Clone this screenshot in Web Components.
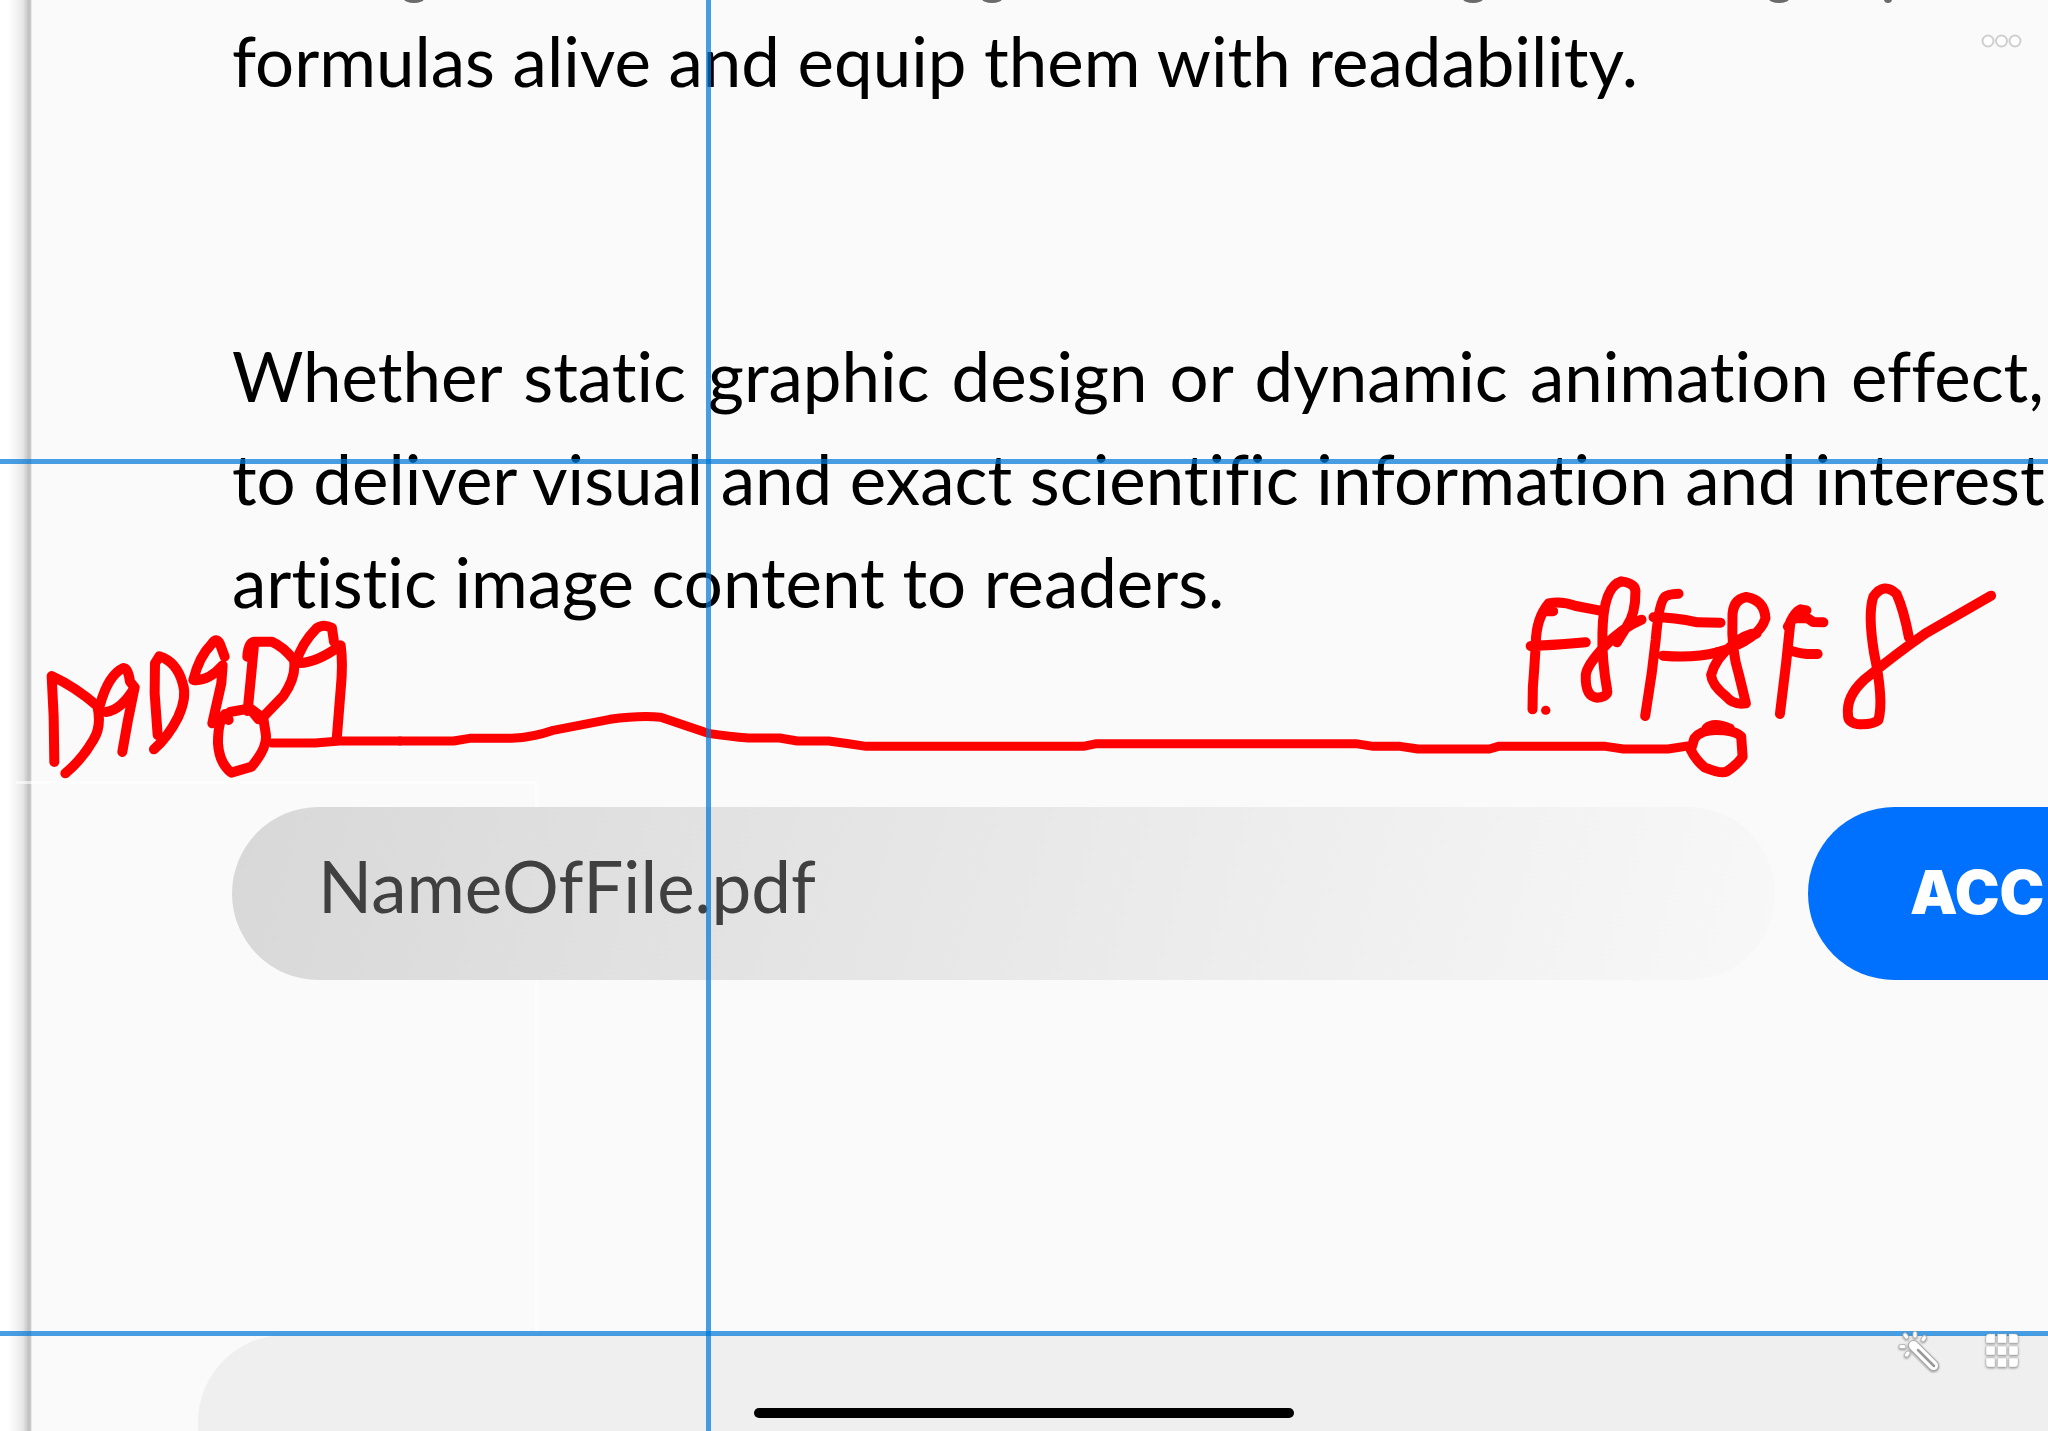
<!DOCTYPE html>
<html lang="en">
<head>
<meta charset="utf-8">
<title>Design review</title>
<style>
html, body { margin: 0; height: 100%; overflow: hidden; background: #fafafa; }
</style>
</head>
<body>
<review-canvas>
  <copy-block>
    <span>formulas alive and equip them with readability.</span>
  </copy-block>
  <copy-block>
    <span>Whether static graphic design or dynamic animation effect,</span>
    <span>to deliver visual and exact scientific information and interest</span>
    <span>artistic image content to readers.</span>
  </copy-block>
  <file-row></file-row>
  <next-panel slot="footer"></next-panel>
  <ink-notes slot="overlay"></ink-notes>
  <guide-lines slot="overlay"></guide-lines>
  <canvas-tools slot="overlay"></canvas-tools>
</review-canvas>
<script>
const define = (name, html) => customElements.define(name, class extends HTMLElement {
  constructor() {
    super();
    this.attachShadow({ mode: 'open' }).innerHTML = html;
  }
});

define('review-canvas', `
<style>
:host { position: relative; display: grid; grid-template-columns: 32px minmax(0, 1fr); min-height: 100vh; overflow: hidden; background: #fafafa; font-family: Lato, sans-serif; font-variant-ligatures: none; }
.edge { background: linear-gradient(90deg, #fff 24%, #f4f4f4 50%, #e6e6e6 72%, #c0c0c0 90%, #c6c6c6 95%, #fafafa); }
.sheet { display: flex; flex-direction: column; min-width: 0; }
main { display: flex; flex-direction: column; gap: 212px; padding: 9px 0 0 200px; }
::slotted(file-row) { margin-top: -38px; }
.foot { margin-top: 355px; flex: 1; display: flex; padding-left: 166px; }
</style>
<div class="edge"></div>
<div class="sheet">
  <main><slot></slot></main>
  <div class="foot"><slot name="footer"></slot></div>
</div>
<slot name="overlay"></slot>`);

define('copy-block', `
<style>
:host { display: flex; flex-direction: column; padding-right: 4px; font-size: 69px; line-height: 103px; color: #000; white-space: nowrap; }
::slotted(span:not(:last-child)) { text-align: justify; text-align-last: justify; }
</style>
<slot></slot>`);

define('file-row', `
<style>
:host { display: flex; gap: 33px; }
label { flex: 0 0 1543px; display: flex; border-radius: 87px; background: linear-gradient(105deg, #d8d8d8, #f8f8f8); }
input { flex: 1; box-sizing: border-box; height: 173px; padding: 0 86px 16px; border: 0; outline: 0; background: none; font: 71px Lato, sans-serif; color: #404040; }
button { flex: 0 0 520px; padding: 0 0 4px 102px; border: 0; border-radius: 87px; background: #0070ff; color: #fff; font: 900 60px Inter, sans-serif; text-align: left; }
</style>
<label><input type="text" value="NameOfFile.pdf" aria-label="File name"></label>
<button type="button">ACC</button>`);

define('next-panel', `
<style>
:host { display: block; flex: 1; background: #efefef; border-top-left-radius: 87px; }
</style>`);

define('guide-lines', `
<style>
:host { position: absolute; inset: 0; pointer-events: none; }
i { position: absolute; background: rgba(0, 120, 215, .72); }
.h { left: 0; right: 0; height: 5px; }
.v { top: 0; bottom: 0; width: 5px; left: 706px; }
b { position: absolute; background: #fff; opacity: .6; }
</style>
<b style="left:16px;top:781px;width:521px;height:3px"></b>
<b style="left:535px;top:784px;width:3px;height:23px"></b>
<b style="left:535px;top:980px;width:3px;height:351px"></b>
<i class="h" style="top:459px"></i>
<i class="h" style="top:1331px"></i>
<i class="v"></i>`);

define('ink-notes', `
<style>
:host { position: absolute; inset: 0; pointer-events: none; }
svg { display: block; overflow: visible; }
path, ellipse { fill: none; stroke: #f00; stroke-width: 10px; stroke-linecap: round; stroke-linejoin: round; vector-effect: non-scaling-stroke; }
.thin { stroke-width: 9px; }
.tail { fill: #6b6b6b; stroke: none; }
</style>
<svg width="2048" height="1431" aria-hidden="true">
  <g>
    <ellipse class="tail" cx="414" cy="-1" rx="10" ry="4"/><ellipse class="tail" cx="992" cy="-1" rx="10" ry="4"/>
    <ellipse class="tail" cx="1473" cy="-1" rx="10" ry="4"/><ellipse class="tail" cx="1779" cy="-1" rx="10" ry="4"/>
    <ellipse class="tail" cx="1888" cy="-1" rx="4" ry="4"/>
  </g>
  <g transform="translate(0 600) scale(.3333)">
    <path d="M163 486L161 350L155 228Q225 260 292 318Q306 380 280 420Q245 480 196 520"/>
    <path d="M300 315Q325 225 370 204Q385 205 390 245L404 262Q365 330 318 336M404 262L384 360L367 456"/>
    <path d="M473 405L464 280L465 190L478 169Q530 185 548 250Q562 290 535 350Q505 410 462 448"/>
    <path d="M674 170L660 132Q650 110 635 132Q597 170 580 240Q625 245 668 196L664 250L637 370"/>
    <path d="M686 360L676 342Q654 360 654 430Q658 490 694 518L755 500Q805 440 797 400L790 355L750 325L690 336M745 320L776 358"/>
    <path d="M742 170Q745 125 765 125L815 125Q850 140 882 180Q890 230 850 288L790 350M762 135L754 220L743 333"/>
    <path d="M888 188Q905 130 950 85Q970 70 996 84L1002 125M888 188Q940 195 1022 136Q1030 190 1022 270L1010 420"/>
  </g>
  <path class="thin" d="M272 743H315L340 741H400"/>
  <g transform="translate(400 680) scale(.893 .3333)">
    <path class="thin" d="M0 183H60L78 175H125Q150 171 170 152L235 118Q270 105 292 112L345 160Q370 170 390 174H425L445 183H480Q500 190 522 199H765L780 191H1070L1090 199H1120L1140 207H1220L1230 199H1350L1370 207H1420L1442 198"/>
  </g>
  <g transform="translate(1480 550) scale(.36224 .3333)">
    <path d="M145 478L146 410Q150 360 154 280Q155 205 190 160Q225 152 265 168L332 182M178 184L202 184M140 288Q220 285 292 277"/>
    <path class="thin" d="M181 481L182 481"/>
    <path d="M446 209Q390 235 345 288Q295 345 292 375Q290 440 323 443Q355 440 351 420Q336 330 338 250Q340 110 390 94Q430 100 429 125Q430 190 405 230L378 277"/>
    <path d="M456 498L474 370L485 270Q494 155 511 140Q520 132 548 131M479 202Q535 202 600 217L664 218M505 317Q590 325 655 307"/>
    <path d="M655 307Q770 270 788 205Q785 150 735 141Q695 150 697 205Q693 300 715 375L734 460Q700 466 680 440Q640 405 638 375Q650 325 695 286Q735 250 764 250L700 286"/>
    <path d="M828 492L845 340L857 215Q870 185 885 178L901 181M850 230L865 204L905 205L920 216L948 217M865 304Q890 314 932 312"/>
    <path d="M1184 262Q1170 180 1150 132Q1115 95 1086 140Q1070 190 1088 310Q1115 450 1100 510Q1085 525 1040 522Q1015 515 1016 495Q1010 440 1060 390Q1150 310 1230 250L1411 137"/>
    <path d="M582 600L592 565Q610 540 650 540Q705 540 721 560L725 620Q710 645 680 665Q665 672 620 652Q595 630 582 600M625 535Q645 515 690 536"/>
  </g>
</svg>`);

define('canvas-tools', `
<style>
:host { position: absolute; inset: 0; pointer-events: none; }
button { position: absolute; padding: 0; border: 0; background: none; pointer-events: auto; }
svg { display: block; }
.more { right: 26px; top: 34px; }
.wand { right: 108px; top: 1330px; }
.grid { right: 29px; top: 1333px; }
.wand svg, .grid svg { filter: drop-shadow(0 1px 1px rgba(0,0,0,.4)); overflow: visible; }
.home { position: absolute; left: 50%; bottom: 13px; width: 540px; height: 10px; margin-left: -270px; border-radius: 5px; background: #000; }
</style>
<button class="more" type="button" aria-label="More"><svg width="41" height="14"><g fill="#fff" stroke="#cfcfcf" stroke-width="2"><circle cx="7" cy="7" r="5.500"/><circle cx="20.500" cy="7" r="5.500"/><circle cx="34" cy="7" r="5.500"/></g></svg></button>
<button class="wand" type="button" aria-label="Auto adjust"><svg width="42" height="42" viewBox="0 0 42 42">
<g fill="none" stroke-linecap="round"><g stroke="#aaa" stroke-width="11"><path d="M15.500 15.500L35.500 35.500"/></g>
<g stroke="#bbb" stroke-width="5"><path d="M17 3.500V6M7 5L8.500 7M26.500 7.500L25 9.500M3 16.500H6M8.500 25L10 23"/></g>
<g stroke="#fff" stroke-width="9"><path d="M15.500 15.500L35.500 35.500"/></g>
<g stroke="#fff" stroke-width="3"><path d="M17 3.500V6M7 5L8.500 7M26.500 7.500L25 9.500M3 16.500H6M8.500 25L10 23"/></g>
<path d="M20 20L36 36" stroke="#999" stroke-width="2.500"/></g></svg></button>
<button class="grid" type="button" aria-label="Grid"><svg width="34" height="36" viewBox="0 0 34 36"><g fill="#fff" stroke="#bbb" stroke-width=".5">
<path d="M4 1H10V10H1V4Q1 1 4 1Z"/><path d="M12.500 1H21.500V10H12.500Z"/><path d="M24 1H30Q33 1 33 4V10H24Z"/>
<path d="M1 13H10V22H1ZM12.500 13H21.500V22H12.500ZM24 13H33V22H24Z"/>
<path d="M1 25H10V34H4Q1 34 1 31ZM12.500 25H21.500V34H12.500ZM24 25H33V31Q33 34 30 34H24Z"/></g></svg></button>
<div class="home"></div>`);
</script>
</body>
</html>
